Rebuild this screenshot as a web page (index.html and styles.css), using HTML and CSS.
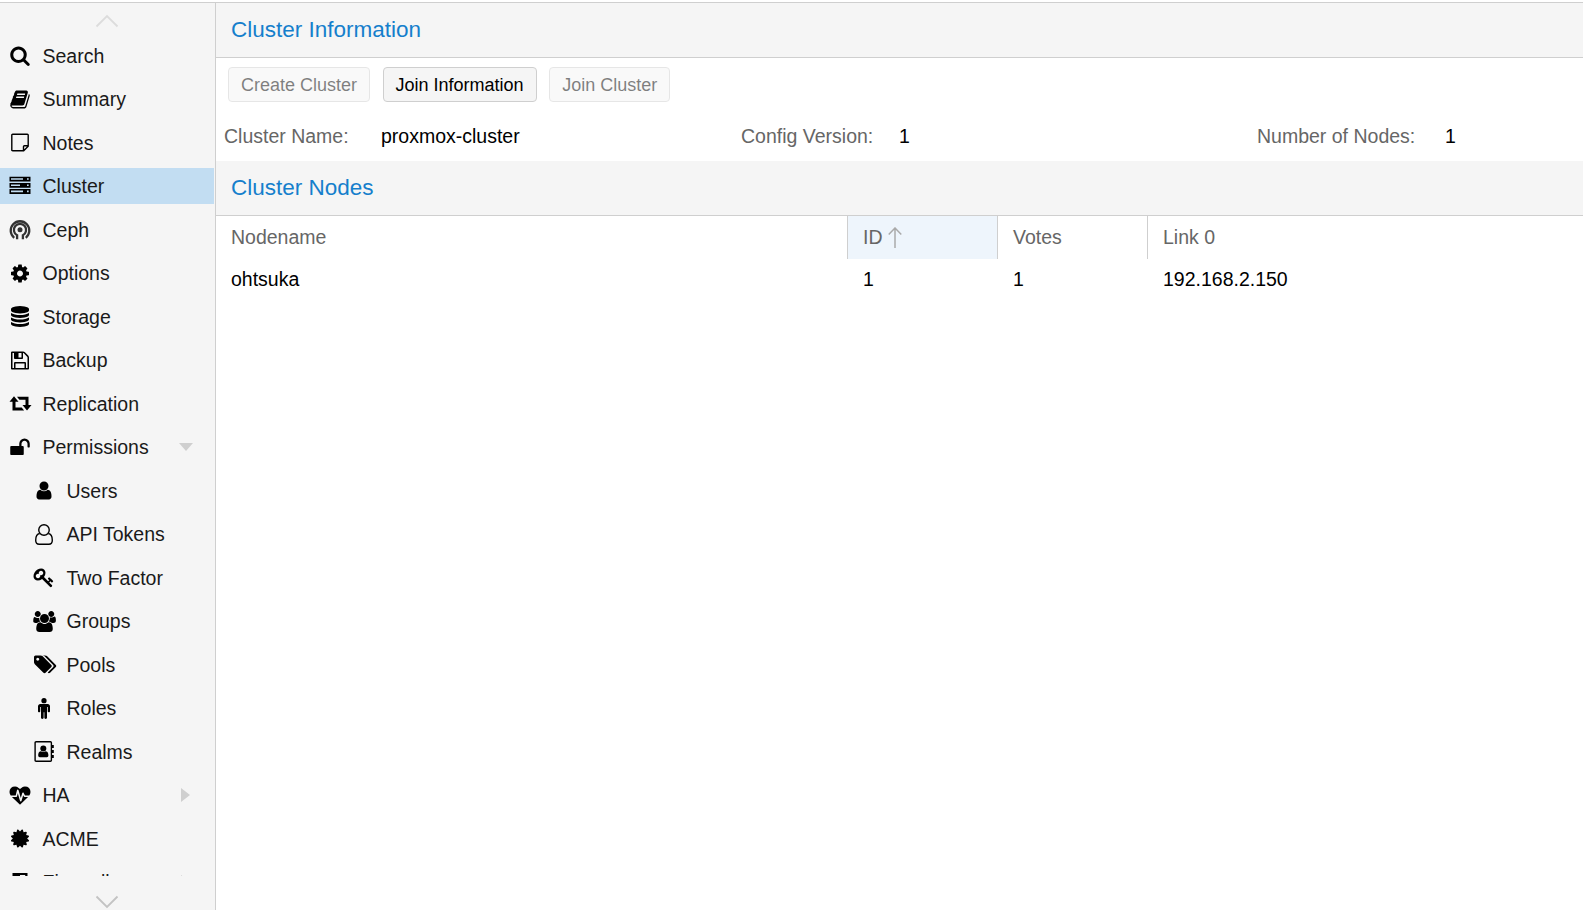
FILE: index.html
```
<!DOCTYPE html>
<html lang="en">
<head>
<meta charset="utf-8">
<title>Cluster</title>
<link rel="stylesheet" href="styles.css">
</head>
<body>
<div class="app">
<nav class="sidebar">
<div class="scroller up"><svg viewBox="0 0 24 14"><path d="M1.500 12.500 12 2l10.500 10.500"/></svg></div>
<div class="viewport"><ul class="tree">
<li class="item"><svg class="icon" viewBox="0 0 1792 1792"><path d="M1216 832q0-185-131.500-316.500t-316.500-131.500-316.500 131.500-131.500 316.500 131.500 316.500 316.500 131.500 316.500-131.500 131.500-316.500zm512 832q0 52-38 90t-90 38q-54 0-90-38l-343-342q-179 124-399 124-143 0-273.500-55.500t-225-150-150-225-55.500-273.500 55.500-273.500 150-225 225-150 273.500-55.500 273.500 55.500 225 150 150 225 55.500 273.500q0 220-124 399l343 343q37 37 37 90z"/></svg><span>Search</span></li>
<li class="item"><svg class="icon" viewBox="0 0 1792 1792"><path d="M1703 478q40 57 18 129l-275 906q-19 64-76.500 107.500t-122.500 43.500h-923q-77 0-148.500-53.500t-99.500-131.500q-24-67-2-127 0-4 3-27t4-37q1-8-3-21.500t-3-19.500q2-11 8-21t16.500-23.500 16.500-23.500q23-38 45-91.500t30-91.500q3-10 .5-30t-.5-28q3-11 17-28t17-23q21-36 42-92t25-90q1-9-2.500-32t.5-28q4-13 22-30.500t22-22.500q19-26 42.500-84.500t27.500-96.500q1-8-3-25.500t-2-26.500q2-8 9-18t18-23 17-21q8-12 16.500-30.500t15-35 16-36 19.500-32 26.500-23.500 36-11.500 47.500 5.500l-1 3q38-9 51-9h761q74 0 114 56t18 130l-274 906q-36 119-71.500 153.500t-128.500 34.500h-869q-27 0-38 15-11 16-1 43 24 70 144 70h923q29 0 56-15.500t35-41.500l300-987q7-22 5-57 38 15 59 43zm-1064 2q-4 13 2 22.500t20 9.500h608q13 0 25.500-9.500t16.500-22.500l21-64q4-13-2-22.500t-20-9.500h-608q-13 0-25.500 9.500t-16.500 22.500zm-83 256q-4 13 2 22.500t20 9.500h608q13 0 25.500-9.500t16.500-22.500l21-64q4-13-2-22.500t-20-9.500h-608q-13 0-25.500 9.500t-16.500 22.500z"/></svg><span>Summary</span></li>
<li class="item"><svg class="icon line" viewBox="0 0 21 21"><path d="M3.200 2.200h14.600q.9 0 .9.900v11.200l-4.500 4.500H3.200q-.9 0-.9-.9V3.100q0-.9.900-.9zM18.500 13.700h-3.600q-.9 0-.9.900v3.800"/></svg><span>Notes</span></li>
<li class="item selected"><svg class="icon" viewBox="0 0 21 21"><path fill-rule="evenodd" d="M0 .7h21v4.800H0zM1.500 2.200v1.600h12V2.200zM17.500 2.200v1.600h1.700V2.200zM0 6.900h21v4.800H0zM1.500 8.400v1.600h9V8.400zM17.500 8.400v1.600h1.700V8.400zM0 13.100h21v4.800H0zM1.500 14.600v1.600h12v-1.600zM17.500 14.600v1.600h1.700v-1.600z"/></svg><span>Cluster</span></li>
<li class="item"><svg class="icon ceph" viewBox="0 0 21 21"><path d="M4.700 18.800a9.300 9.300 0 1 1 11.600 0M7.600 20.200v-3.900a6.100 6.100 0 1 1 5.800 0v3.900"/><circle cx="10.500" cy="10.800" r="2.500"/></svg><span>Ceph</span></li>
<li class="item"><svg class="icon" viewBox="0 0 1792 1792"><path d="M1152 896q0-106-75-181t-181-75-181 75-75 181 75 181 181 75 181-75 75-181zm512-109v222q0 12-8 23t-20 13l-185 28q-19 54-39 91 35 50 107 138 10 12 10 25t-9 23q-27 37-99 108t-94 71q-12 0-26-9l-138-108q-44 23-91 38-16 136-29 186-7 28-36 28h-222q-14 0-24.500-8.500t-11.500-21.500l-28-184q-49-16-90-37l-141 107q-10 9-25 9-14 0-25-11-126-114-165-168-7-10-7-23 0-12 8-23 15-21 51-66.500t54-70.500q-27-50-41-99l-183-27q-13-2-21-12.500t-8-23.500v-222q0-12 8-23t19-13l186-28q14-46 39-92-40-57-107-138-10-12-10-24 0-10 9-23 26-36 98.500-107.500t94.500-71.500q13 0 26 10l138 107q44-23 91-38 16-136 29-186 7-28 36-28h222q14 0 24.500 8.500t11.500 21.500l28 184q49 16 90 37l142-107q9-9 24-9 13 0 25 10 129 119 165 170 7 8 7 22 0 12-8 23-15 21-51 66.500t-54 70.500q26 50 41 98l183 28q13 2 21 12.500t8 23.500z"/></svg><span>Options</span></li>
<li class="item"><svg class="icon" viewBox="0 0 1792 1792"><path d="M896 768q237 0 443-43t325-127v170q0 69-103 128t-280 93.500-385 34.500-385-34.500-280-93.500-103-128v-170q119 84 325 127t443 43zm0 768q237 0 443-43t325-127v170q0 69-103 128t-280 93.500-385 34.500-385-34.500-280-93.500-103-128v-170q119 84 325 127t443 43zm0-384q237 0 443-43t325-127v170q0 69-103 128t-280 93.500-385 34.500-385-34.500-280-93.500-103-128v-170q119 84 325 127t443 43zm0-1152q208 0 385 34.500t280 93.500 103 128v128q0 69-103 128t-280 93.500-385 34.500-385-34.500-280-93.500-103-128v-128q0-69 103-128t280-93.500 385-34.500z"/></svg><span>Storage</span></li>
<li class="item"><svg class="icon" viewBox="0 0 1792 1792"><path d="M512 1536h768v-384h-768v384zm896 0h128v-896q0-14-10-38.500t-20-34.500l-281-281q-10-10-34-20t-39-10v416q0 40-28 68t-68 28h-576q-40 0-68-28t-28-68v-416h-128v1280h128v-416q0-40 28-68t68-28h832q40 0 68 28t28 68v416zm-384-928v-320q0-13-9.500-22.500t-22.500-9.500h-192q-13 0-22.500 9.500t-9.500 22.500v320q0 13 9.500 22.500t22.500 9.500h192q13 0 22.500-9.500t9.500-22.500zm640 32v928q0 40-28 68t-68 28h-1344q-40 0-68-28t-28-68v-1344q0-40 28-68t68-28h928q40 0 88 20t76 48l280 280q28 28 48 76t20 88z"/></svg><span>Backup</span></li>
<li class="item"><svg class="icon wide" viewBox="0 0 22 21"><path d="M4.500 3.300 9 8.800H6v5.700h6.200l2.400 3H3V8.800H0zM7.500 3.800H19v8.200h3l-4.500 5.500L13 12h3V6.800H9.900z"/></svg><span>Replication</span></li>
<li class="item"><svg class="icon" viewBox="0 0 1792 1792"><path d="M1728 576v256q0 26-19 45t-45 19h-64q-26 0-45-19t-19-45v-256q0-106-75-181t-181-75-181 75-75 181v192h96q40 0 68 28t28 68v576q0 40-28 68t-68 28h-960q-40 0-68-28t-28-68v-576q0-40 28-68t68-28h672v-192q0-185 131.500-316.500t316.500-131.500 316.500 131.500 131.500 316.500z"/></svg><span>Permissions</span><i class="expander open"></i></li>
<li class="item child"><svg class="icon" viewBox="0 0 1792 1792"><path d="M1536 1399q0 109-62.500 187t-150.500 78h-854q-88 0-150.500-78t-62.500-187q0-85 8.500-160.500t31.500-152 58.500-131 94-89 134.500-34.500q131 128 313 128t313-128q76 0 134.500 34.500t94 89 58.500 131 31.500 152 8.500 160.500zm-256-887q0 159-112.500 271.500t-271.500 112.500-271.500-112.500-112.500-271.500 112.500-271.500 271.500-112.500 271.500 112.500 112.500 271.500z"/></svg><span>Users</span></li>
<li class="item child"><svg class="icon line" viewBox="0 0 21 21"><circle cx="10.500" cy="6" r="5.250"/><path d="M6.200 9.500C3.200 10 2.200 12.800 2.200 16.200q0 4 3.500 4h9.600q3.500 0 3.500-4c0-3.400-1-6.200-4-6.700"/></svg><span>API Tokens</span></li>
<li class="item child"><svg class="icon" viewBox="0 0 1792 1792"><path d="M832 512q0-80-56-136t-136-56-136 56-56 136q0 42 19 83-41-19-83-19-80 0-136 56t-56 136 56 136 136 56 136-56 56-136q0-42-19-83 41 19 83 19 80 0 136-56t56-136zm851 704q0 17-49 66t-66 49q-9 0-28.500-16t-36.500-33-38.500-40-24.500-26l-96 96 220 220q28 28 28 68 0 42-39 81t-81 39q-40 0-68-28l-671-671q-176 131-365 131-163 0-265.500-102.500t-102.500-265.500q0-160 95-313t248-248 313-95q163 0 265.500 102.500t102.500 265.500q0 189-131 365l355 355 96-96q-3-3-26-24.500t-40-38.500-33-36.500-16-28.500q0-17 49-66t66-49q13 0 23 10 6 6 46 44.500t82 79.500 86.500 86 73 78 28.500 41z"/></svg><span>Two Factor</span></li>
<li class="item child"><svg class="icon xwide" viewBox="0 0 2048 1792"><path d="M657 896q-162 5-265 128h-134q-82 0-138-40.500t-56-118.500q0-353 124-353 6 0 43.500 21t97.500 42.500 119 21.500q67 0 133-23-5 37-5 66 0 159 93 293zm1071 637q0 120-73 189.500t-194 69.500h-874q-121 0-194-69.500t-73-189.500q0-53 3.500-103.500t14-109 26.500-108.500 43-97.500 62-81 85.500-53.500 111.500-20q10 0 43 21.500t73 48 107 48 135 21.500 135-21.500 107-48 73-48 43-21.500q61 0 111.500 20t85.500 53.500 62 81 43 97.500 26.500 108.500 14 109 3.500 103.500zm-1024-1277q0 106-75 181t-181 75-181-75-75-181 75-181 181-75 181 75 75 181zm704 384q0 159-112.500 271.500t-271.500 112.500-271.500-112.500-112.500-271.500 112.500-271.500 271.500-112.500 271.500 112.500 112.500 271.500zm576 225q0 78-56 118.500t-138 40.500h-134q-103-123-265-128 93-134 93-293 0-29-5-66 66 23 133 23 59 0 119-21.500t97.500-42.500 43.500-21q124 0 124 353zm-128-609q0 106-75 181t-181 75-181-75-75-181 75-181 181-75 181 75 75 181z"/></svg><span>Groups</span></li>
<li class="item child"><svg class="icon xwide" viewBox="0 0 2048 1792"><path d="M576 448q0-53-37.500-90.500t-90.500-37.500-90.500 37.500-37.500 90.500 37.500 90.500 90.500 37.500 90.500-37.500 37.500-90.500zm1067 576q0 53-37 90l-491 492q-39 37-91 37-53 0-90-37l-715-716q-38-37-64.500-101t-26.500-117v-416q0-52 38-90t90-38h416q53 0 117 26.500t102 64.500l715 714q37 39 37 91zm384 0q0 53-37 90l-491 492q-39 37-91 37-36 0-59-14t-53-45l470-470q37-37 37-90 0-52-37-91l-715-714q-38-38-102-64.500t-117-26.500h224q53 0 117 26.500t102 64.500l715 714q37 39 37 91z"/></svg><span>Pools</span></li>
<li class="item child"><svg class="icon" viewBox="0 0 1792 1792"><circle cx="896" cy="232" r="224"/><path d="M1408 704v416q0 40-28 68t-68 28-68-28-28-68v-352h-64v912q0 46-33 79t-79 33-79-33-33-79v-464h-64v464q0 46-33 79t-79 33-79-33-33-79v-912h-64v352q0 40-28 68t-68 28-68-28-28-68v-416q0-80 56-136t136-56h640q80 0 136 56t56 136z"/></svg><span>Roles</span></li>
<li class="item child"><svg class="icon" viewBox="0 0 21 21"><path d="M2.600.7h14.300q1 0 1 1v17.600q0 1-1 1H2.600q-1 0-1-1V1.700q0-1 1-1z" fill="none" stroke="#000" stroke-width="1.400"/><circle cx="9.800" cy="7.600" r="3"/><path d="M7.300 10.200q2.500 1.600 5 0c2.200.3 2.600 2.600 2.600 4.200q0 1.800-1.500 1.800H6.200q-1.500 0-1.500-1.800c0-1.600.4-3.900 2.600-4.200zM18.500 4h1.800v3h-1.800zM18.500 9h1.800v3h-1.800zM18.500 14h1.800v3h-1.800z"/></svg><span>Realms</span></li>
<li class="item"><svg class="icon" viewBox="0 0 1792 1792"><path d="M1280 1024h305q-5 6-10 10.500t-9 7.500l-3 4-623 600q-18 18-44 18t-44-18l-624-602q-5-2-21-20h369q22 0 39.500-13.500t22.500-34.500l70-281 190 667q6 20 23 33t39 13q21 0 38-13t23-33l146-485 56 112q18 35 57 35zm512-428q0 145-103 300h-369l-111-221q-8-17-25.500-27t-36.500-8q-45 5-56 46l-129 430-196-686q-6-20-23.500-33t-39.500-13-39 13.500-22 34.500l-116 464h-423q-103-155-103-300 0-220 127-344t351-124q62 0 126.500 21.500t120 58 95.500 68.500 76 68q36-36 76-68t95.500-68.500 120-58 126.500-21.500q224 0 351 124t127 344z"/></svg><span>HA</span><i class="expander"></i></li>
<li class="item"><svg class="icon" viewBox="0 0 1792 1792"><path d="M1504 896l138 135q30 28 20 70-12 41-52 51l-188 48 53 186q12 41-19 70-29 31-70 19l-186-53-48 188q-10 40-51 52-12 2-19 2-31 0-51-22l-135-138-135 138q-28 30-70 20-41-11-51-52l-48-188-186 53q-41 12-70-19-31-29-19-70l53-186-188-48q-40-10-52-51-10-42 20-70l138-135-138-135q-30-28-20-70 12-41 52-51l188-48-53-186q-12-41 19-70 29-31 70-19l186 53 48-188q10-41 51-51 41-12 70 19l135 139 135-139q29-30 70-19 41 10 51 51l48 188 186-53q41-12 70 19 31 29 19 70l-53 186 188 48q40 10 52 51 10 42-20 70z"/></svg><span>ACME</span></li>
<li class="item"><svg class="icon" viewBox="0 0 21 21"><path fill-rule="evenodd" d="M3 1h15v9.500q0 5.500-7.500 9Q3 16 3 10.500zM10.500 3v13.700q5.200-2.500 5.200-6.500V3z"/></svg><span>Firewall</span><i class="expander"></i></li>
</ul></div>
<div class="scroller down"><svg viewBox="0 0 24 14"><path d="M1.500 1.500 12 12l10.500-10.500"/></svg></div>
</nav>
<main class="content">
<h2 class="title">Cluster Information</h2>
<div class="toolbar"><button class="btn" disabled>Create Cluster</button><button class="btn">Join Information</button><button class="btn" disabled>Join Cluster</button></div>
<dl class="info">
<div class="field name"><dt>Cluster Name:</dt><dd>proxmox-cluster</dd></div>
<div class="field version"><dt>Config Version:</dt><dd>1</dd></div>
<div class="field count"><dt>Number of Nodes:</dt><dd>1</dd></div>
</dl>
<h2 class="title">Cluster Nodes</h2>
<div class="grid">
<div class="row head"><div>Nodename</div><div class="sorted">ID<svg class="arrow" viewBox="0 0 14 21"><path d="M7 21V1M.7 7.500 7 1l6.300 6.500"/></svg></div><div>Votes</div><div>Link 0</div></div>
<div class="row"><div>ohtsuka</div><div>1</div><div>1</div><div>192.168.2.150</div></div>
</div>
</main>
</div>
</body>
</html>
```
FILE: styles.css
```
* { box-sizing: border-box; }
body { margin: 0; padding-top: 2px; background: #fff; color: #000; font: 19.5px/24px "Liberation Sans", Arial, sans-serif; }
.app { display: flex; height: 908px; border-top: 1px solid #cfcfcf; overflow: hidden; }
.sidebar { display: flex; flex-direction: column; width: 216px; flex: none; background: #f5f5f5; border-right: 1px solid #cfcfcf; }
.scroller { display: flex; justify-content: center; height: 34px; flex: none; padding-right: 1px; }
.scroller svg { width: 24px; height: 14px; fill: none; stroke: #c3c3c3; stroke-width: 1.8; }
.up { padding-top: 11px; }
.up svg { stroke: #dcdcdc; }
.down { padding-top: 19px; }
.viewport { flex: 1; min-height: 0; overflow: hidden; }
.tree { display: flex; flex-direction: column; gap: 7.5px; margin: 0; padding: .8px 1px 0 0; list-style: none; }
.item { display: flex; align-items: center; height: 36px; flex: none; padding-left: 9px; color: #1a1a1a; }
.child { padding-left: 33px; }
.selected { background: #c2ddf2; }
.icon { width: 21px; height: 21px; margin-right: 12.5px; flex: none; fill: #000; overflow: visible; transform: translateX(.5px); }
.wide { width: 22px; margin-left: 0; margin-right: 11.5px; }
.xwide { width: 24px; margin-left: -1px; margin-right: 10.5px; }
.line { fill: none; stroke: #000; stroke-width: 1.4; }
.ceph { fill: #333; }
.ceph path { fill: none; stroke: #333; stroke-width: 2.3; }
.expander { width: 0; height: 0; margin-left: auto; margin-right: 24px; border-left: 9px solid #cfcfcf; border-top: 7px solid transparent; border-bottom: 7px solid transparent; }
.expander.open { margin-right: 21px; border-top: 8px solid #cfcfcf; border-bottom: 0; border-left: 7px solid transparent; border-right: 7px solid transparent; }
.content { flex: 1; min-width: 0; }
.title { height: 55px; margin: 0; padding: 0 15px; background: #f5f5f5; border-bottom: 1px solid #cfcfcf; color: #157fcc; font-size: 22.5px; font-weight: 400; line-height: 53px; }
.toolbar { display: flex; gap: 12.5px; padding: 9px 12px 0; height: 53px; }
.btn { height: 35px; padding: 1px 12px 0; border: 1px solid #cfcfcf; border-radius: 4px; background: #f5f5f5; color: #000; font: 18px/33px "Liberation Sans", Arial, sans-serif; white-space: nowrap; }
.btn:disabled { opacity: .5; }
.info { display: flex; height: 50px; margin: 0; padding: 13px 8px 0; }
.field { display: flex; width: 517px; flex: none; }
.field dt { width: 157px; color: #666; white-space: nowrap; }
.field dd { margin: 0; }
.version { width: 516px; }
.version dt { width: 158px; }
.count { width: 300px; }
.count dt { width: 188px; }
.row { display: grid; grid-template-columns: 631px 150px 150px 1fr; height: 40px; line-height: 40px; }
.row > div { padding-left: 15px; border-left: 1px solid transparent; }
.row > div:first-child { border-left: 0; }
.head { height: 43px; line-height: 42px; color: #666; }
.head > div { border-left-color: #cfcfcf; }
.head .sorted { display: flex; align-items: center; padding-bottom: 1px; background: #eef5fc; }
.arrow { width: 14px; height: 21px; margin-left: 5px; fill: none; stroke: #aaa; stroke-width: 1.5; }
```
